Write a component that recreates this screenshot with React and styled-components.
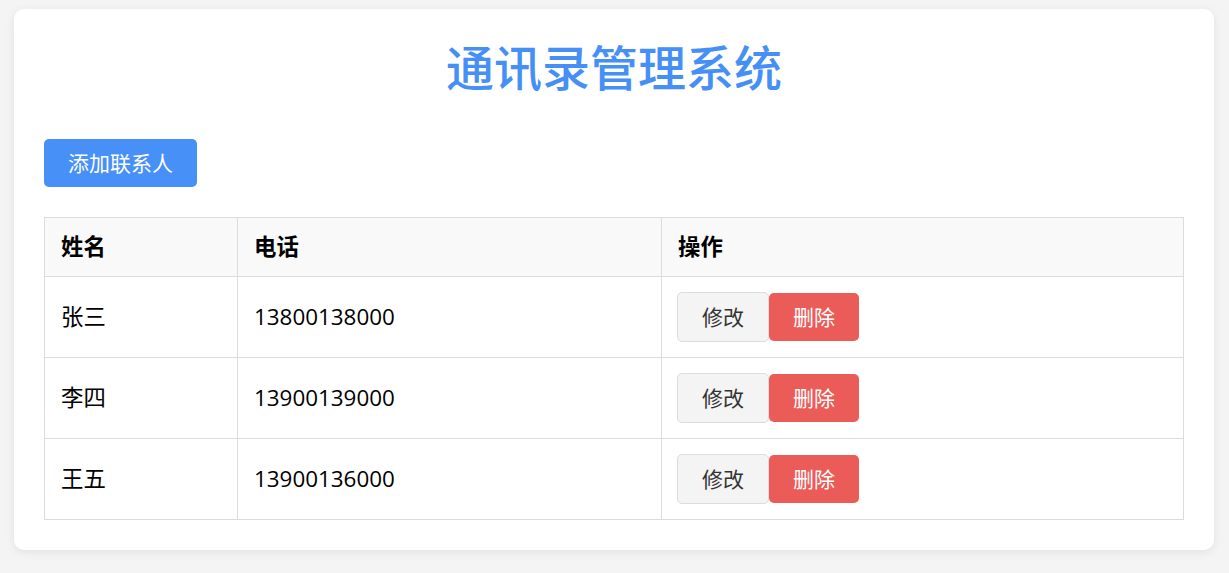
import React from "react";
import styled, { createGlobalStyle } from "styled-components";

const Global = createGlobalStyle`
  html, body { margin: 0; padding: 0; }
  body {
    background: #f4f4f4;
    font-family: "Open Sans", "Noto Sans CJK SC", sans-serif;
    color: #000;
  }
  * { box-sizing: border-box; }
`;

const Page = styled.div`
  padding: 9px 15px 20px 14px;
`;

const Card = styled.div`
  max-width: 1200px;
  margin: 0 auto;
  background: #fff;
  border-radius: 10px;
  box-shadow: 0 2px 10px rgba(0, 0, 0, 0.08);
  padding: 30px;
`;

const Title = styled.h1`
  margin: 0 0 48px;
  text-align: center;
  color: #4690f5;
  font-size: 48px;
  line-height: 52px;
  font-weight: 500;
  font-family: "Noto Sans CJK SC", sans-serif;
`;

const Button = styled.button`
  font-family: "Open Sans", "Noto Sans CJK SC", sans-serif;
  font-size: 21px;
  line-height: 28px;
  padding: 10px 24px;
  border-radius: 5px;
  cursor: pointer;
  border: ${(p) => (p.$variant === "default" ? "1px solid #dcdcdc" : "none")};
  background: ${(p) =>
    p.$variant === "primary" ? "#4690f7" : p.$variant === "danger" ? "#eb5c58" : "#f4f4f4"};
  color: ${(p) => (p.$variant === "default" ? "#333" : "#fff")};
`;

const Toolbar = styled.div`
  display: flex;
  margin-bottom: 30px;
`;

const Table = styled.table`
  width: 100%;
  border-collapse: collapse;
  font-size: 22.4px;
`;

const Th = styled.th`
  text-align: left;
  font-weight: 700;
  background: #f9f9f9;
  border: 1px solid #dcdcdc;
  padding: 15px 16px;
  line-height: 28px;
  width: ${(p) => p.$w || "auto"};
`;

const Td = styled.td`
  border: 1px solid #dcdcdc;
  padding: 15px 16px 15px ${(p) => (p.$actions ? "15px" : "16px")};
  line-height: 28px;
  vertical-align: middle;
`;

const Actions = styled.div`
  display: flex;
  align-items: center;
`;

const contacts = [
  { name: "张三", phone: "13800138000" },
  { name: "李四", phone: "13900139000" },
  { name: "王五", phone: "13900136000" },
];

export default function App() {
  return (
    <>
      <Global />
      <Page>
        <Card>
          <Title>通讯录管理系统</Title>
          <Toolbar>
            <Button $variant="primary">添加联系人</Button>
          </Toolbar>
          <Table>
            <thead>
              <tr>
                <Th $w="193px">姓名</Th>
                <Th $w="424px">电话</Th>
                <Th>操作</Th>
              </tr>
            </thead>
            <tbody>
              {contacts.map((c) => (
                <tr key={c.name}>
                  <Td>{c.name}</Td>
                  <Td>{c.phone}</Td>
                  <Td $actions>
                    <Actions>
                      <Button $variant="default">修改</Button>
                      <Button $variant="danger">删除</Button>
                    </Actions>
                  </Td>
                </tr>
              ))}
            </tbody>
          </Table>
        </Card>
      </Page>
    </>
  );
}
